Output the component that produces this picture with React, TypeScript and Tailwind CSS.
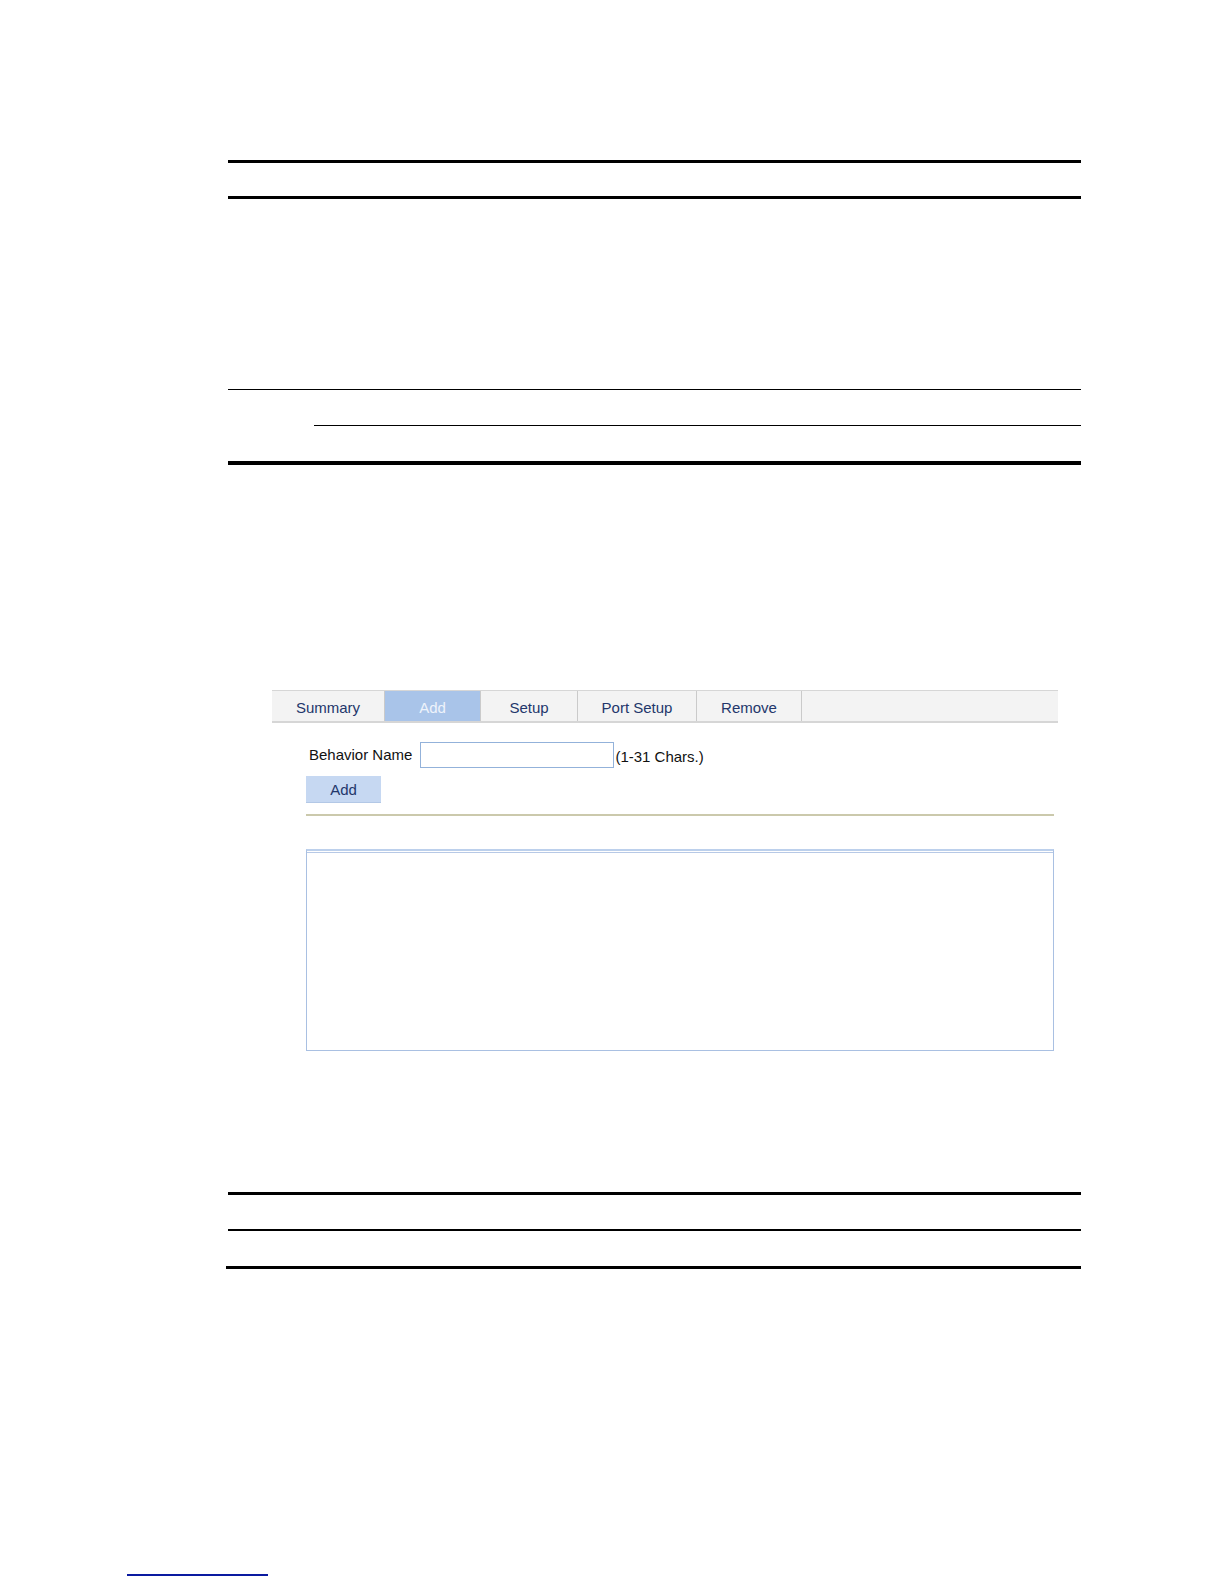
import React, { useState } from 'react';

const tabs = [
  { name: 'Summary', width: 'w-[113px]' },
  { name: 'Add', width: 'w-[96px]' },
  { name: 'Setup', width: 'w-[97px]' },
  { name: 'Port Setup', width: 'w-[119px]' },
  { name: 'Remove', width: 'w-[105px]' },
];

const Rule: React.FC<{ className: string }> = ({ className }) => <div className={className} />;

const BehaviorPanel: React.FC = () => {
  const [active, setActive] = useState('Add');
  const [name, setName] = useState('');

  return (
    <div className="ml-[272px] w-[786px] font-['Liberation_Sans',Arial,sans-serif]">
      <div className="flex h-[33px] border-t border-b-2 border-[#d6d6d6] bg-[#f3f3f3]">
        {tabs.map((t) => (
          <button
            key={t.name}
            onClick={() => setActive(t.name)}
            className={`${t.width} flex items-center justify-center border-r border-[#cacaca] pt-[5px] text-[15px] ${
              active === t.name ? 'bg-[#a9c4e9] text-[#eef3fb]' : 'text-[#23376b]'
            }`}
          >
            {t.name}
          </button>
        ))}
      </div>

      <div className="ml-[34px] mr-[4px]">
        <div className="mt-[19px] flex items-end">
          <span className="mb-[2px] mr-[8px] ml-[3px] text-[15px] text-[#111]">Behavior Name</span>
          <input
            value={name}
            onChange={(e) => setName(e.target.value)}
            className="h-[26px] w-[194px] border border-[#93b2da] bg-white px-1 text-[14px] outline-none"
          />
          <span className="ml-[1px] text-[15px] text-[#111]">(1-31 Chars.)</span>
        </div>
        <button className="mt-[8px] h-[27px] w-[75px] border-b border-[#b3c8e6] bg-[#c6d8f2] pt-[2px] text-[15px] text-[#23376b]">
          Add
        </button>
        <div className="mt-[11px] h-[2px] bg-[#cbc9ac]" />
        <div className="mt-[33px] h-[202px] border border-[#a9c0e2] border-t-2 border-t-[#bcd0ec]">
          <div className="mt-[1px] h-px bg-[#b7c9e6]" />
        </div>
      </div>
    </div>
  );
};

export default function App() {
  return (
    <div className="min-h-[1584px] w-full bg-white pt-[160px]">
      <div className="ml-[228px] w-[853px]">
        <Rule className="h-[3px] bg-black" />
        <div className="h-[33px]" />
        <Rule className="h-[3px] bg-black" />
        <div className="h-[190px]" />
        <Rule className="h-[1px] bg-black" />
        <div className="h-[35px]" />
        <Rule className="ml-[86px] h-[1px] bg-black" />
        <div className="h-[35px]" />
        <Rule className="h-[4px] bg-black" />
      </div>

      <div className="mt-[225px]">
        <BehaviorPanel />
      </div>

      <div className="mt-[141px] ml-[228px] w-[853px]">
        <Rule className="h-[3px] bg-black" />
        <div className="h-[34px]" />
        <Rule className="h-[2px] bg-black" />
        <div className="h-[35px]" />
        <Rule className="-ml-[2px] h-[3px] bg-black" />
      </div>

      <div className="mt-[305px] ml-[127px] w-[141px]">
        <Rule className="h-[2px] bg-[#0a1aa0]" />
      </div>
    </div>
  );
}
